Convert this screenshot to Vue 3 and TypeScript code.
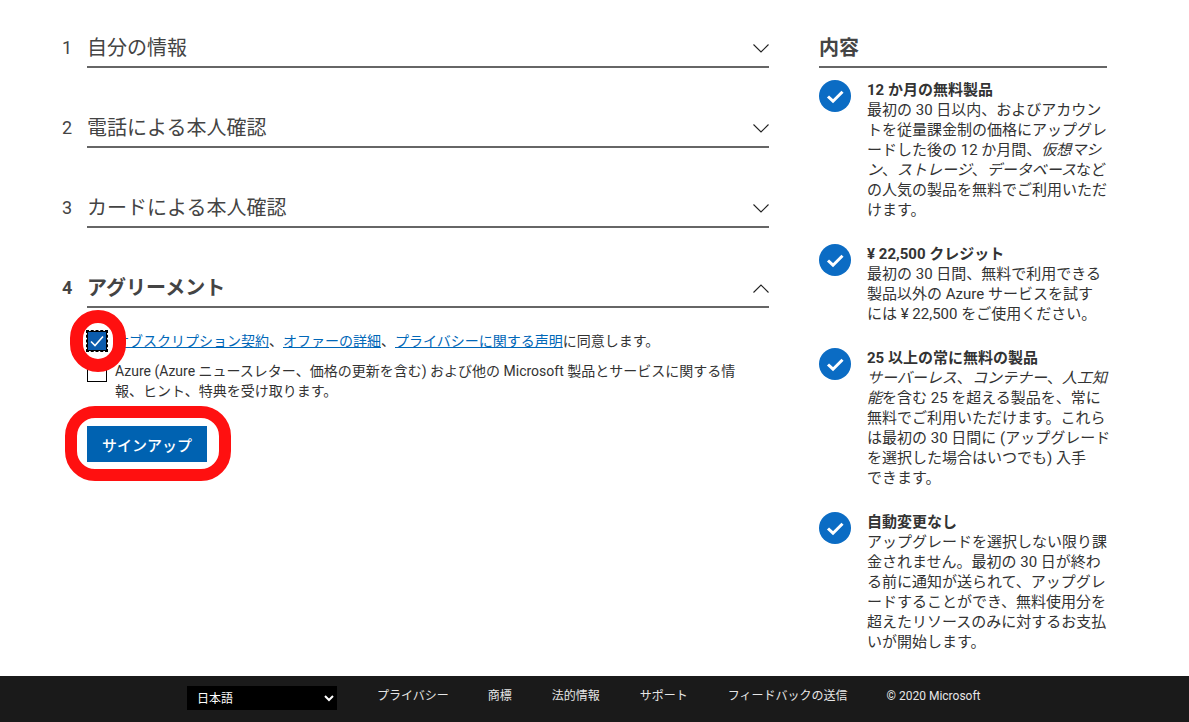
<script setup lang="ts">
const sections = [
  { n: '1', title: '自分の情報' },
  { n: '2', title: '電話による本人確認' },
  { n: '3', title: 'カードによる本人確認' },
]
const links = ['プライバシー', '商標', '法的情報', 'サポート', 'フィードバックの送信', '© 2020 Microsoft']
</script>

<template>
  <div class="page">
    <main class="main">
      <section class="left">
        <div v-for="s in sections" :key="s.n" class="step">
          <span class="num">{{ s.n }}</span>
          <div class="head">
            <h2>{{ s.title }}</h2>
            <svg class="chev" width="16" height="9" viewBox="0 0 16 9"><path d="M.5.5l7.5 7.5 7.5-7.5" fill="none" stroke="#222" stroke-width="1.1" /></svg>
          </div>
        </div>
        <div class="step active">
          <span class="num">4</span>
          <div class="head">
            <h2>アグリーメント</h2>
            <svg class="chev" width="16" height="9" viewBox="0 0 16 9"><path d="M.5 8.5L8 1l7.5 7.5" fill="none" stroke="#222" stroke-width="1.1" /></svg>
          </div>
        </div>
        <div class="agree">
          <div class="check-row first">
            <span class="box checked">
              <svg width="16" height="12" viewBox="0 0 16 12"><path d="M2 6.5l4 4 8-9" fill="none" stroke="#fff" stroke-width="1.6" /></svg>
              <span class="ring ring-check"></span>
            </span>
            <p><a>サブスクリプション契約</a>、<a>オファーの詳細</a>、<a>プライバシーに関する声明</a>に同意します。</p>
          </div>
          <div class="check-row">
            <span class="box"></span>
            <p>Azure (Azure ニュースレター、価格の更新を含む) および他の Microsoft 製品とサービスに関する情<br>報、ヒント、特典を受け取ります。</p>
          </div>
          <button class="signup">サインアップ<span class="ring ring-btn"></span></button>
        </div>
      </section>

      <aside class="right">
        <h2 class="side-title">内容</h2>
        <div class="item">
          <span class="tick"><svg width="32" height="32" viewBox="0 0 32 32"><circle cx="16" cy="16" r="16" fill="#0b6cc4" /><path d="M9 16.5l5 4.7 9.5-9.5" fill="none" stroke="#fff" stroke-width="3" /></svg></span>
          <div class="body">
            <h3>12 か月の無料製品</h3>
            <p>最初の 30 日以内、およびアカウン<br>トを従量課金制の価格にアップグレ<br>ードした後の 12 か月間、<em>仮想マシ<br>ン</em>、<em>ストレージ</em>、<em>データベース</em>など<br>の人気の製品を無料でご利用いただ<br>けます。</p>
          </div>
        </div>
        <div class="item">
          <span class="tick"><svg width="32" height="32" viewBox="0 0 32 32"><circle cx="16" cy="16" r="16" fill="#0b6cc4" /><path d="M9 16.5l5 4.7 9.5-9.5" fill="none" stroke="#fff" stroke-width="3" /></svg></span>
          <div class="body">
            <h3>¥ 22,500 クレジット</h3>
            <p>最初の 30 日間、無料で利用できる<br>製品以外の Azure サービスを試す<br>には ¥ 22,500 をご使用ください。</p>
          </div>
        </div>
        <div class="item">
          <span class="tick"><svg width="32" height="32" viewBox="0 0 32 32"><circle cx="16" cy="16" r="16" fill="#0b6cc4" /><path d="M9 16.5l5 4.7 9.5-9.5" fill="none" stroke="#fff" stroke-width="3" /></svg></span>
          <div class="body">
            <h3>25 以上の常に無料の製品</h3>
            <p><em>サーバーレス</em>、<em>コンテナー</em>、<em>人工知<br>能</em>を含む 25 を超える製品を、常に<br>無料でご利用いただけます。これら<br>は最初の 30 日間に (アップグレード<br>を選択した場合はいつでも) 入手<br>できます。</p>
          </div>
        </div>
        <div class="item">
          <span class="tick"><svg width="32" height="32" viewBox="0 0 32 32"><circle cx="16" cy="16" r="16" fill="#0b6cc4" /><path d="M9 16.5l5 4.7 9.5-9.5" fill="none" stroke="#fff" stroke-width="3" /></svg></span>
          <div class="body">
            <h3>自動変更なし</h3>
            <p>アップグレードを選択しない限り課<br>金されません。最初の 30 日が終わ<br>る前に通知が送られて、アップグレ<br>ードすることができ、無料使用分を<br>超えたリソースのみに対するお支払<br>いが開始します。</p>
          </div>
        </div>
      </aside>
    </main>

    <footer class="footer">
      <div class="lang">
        <span class="lang-text">日本語</span>
        <svg width="10" height="7" viewBox="0 0 10 7"><path d="M1 1l4 4 4-4" fill="none" stroke="#fff" stroke-width="2" /></svg>
      </div>
      <span v-for="l in links" :key="l" class="flink">{{ l }}</span>
    </footer>
  </div>
</template>

<style>
html, body { margin: 0; background: #fff; }
</style>

<style scoped>
.page {
  width: 1189px;
  height: 722px;
  display: flex;
  flex-direction: column;
  overflow: hidden;
  font-family: Roboto, "Noto Sans CJK JP", sans-serif;
  color: #333;
}
.main {
  flex: 1;
  display: flex;
  padding: 0 82px 0 62px;
  gap: 50px;
}
.left { width: 707px; }
.step { display: flex; height: 67px; margin-bottom: 13px; }
.step.active { font-weight: 700; margin-bottom: 0; }
.num { width: 25px; flex: none; font-size: 18px; line-height: 27px; padding-top: 34px; color: #444; }
.head {
  flex: 1;
  height: 68px;
  box-sizing: border-box;
  padding-top: 34px;
  border-bottom: 2px solid #666;
  display: flex;
  justify-content: space-between;
  align-items: flex-start;
}
h2 { margin: 0; font-size: 20px; line-height: 28px; font-weight: inherit; color: #444; }
.chev { margin-top: 10px; margin-right: 0; }
.agree { padding: 24px 0 0 25px; }
.check-row { display: flex; gap: 8px; font-size: 14px; line-height: 20px; margin-bottom: 10px; }
.check-row p { margin: 0; white-space: nowrap; }
.box {
  position: relative;
  flex: none;
  width: 20px;
  height: 20px;
  box-sizing: border-box;
  border: 1px solid #000;
  margin-top: 1px;
  display: flex;
  align-items: center;
  justify-content: center;
}
.first .box { margin-top: 0; }
.checked { background: #0b5cad; outline: 1px dashed #000; z-index: 1; }
a { color: #0067b8; text-decoration: underline; }
.ring { position: absolute; border: 13px solid #ff1010; background: transparent; box-sizing: border-box; pointer-events: none; }
.ring-check { left: -18px; top: -22px; width: 56px; height: 62px; border-radius: 28px; }
.signup {
  position: relative;
  display: block;
  margin-top: 25px;
  width: 120px;
  height: 36px;
  border: 0;
  background: #0062b1;
  color: #fff;
  font: inherit;
  font-size: 15px;
  font-weight: 500;
}
.ring-btn { left: -22px; top: -20px; width: 166px; height: 75px; border-radius: 30px; border-width: 12px; }
.right { width: 288px; flex: none; }
.side-title {
  font-weight: 700;
  height: 68px;
  box-sizing: border-box;
  padding-top: 34px;
  border-bottom: 2px solid #666;
}
.item { display: flex; gap: 16px; margin-top: 12px; margin-bottom: 24px; }
.item + .item { margin-top: 0; }
.tick { flex: none; width: 32px; height: 32px; }
.body { width: 240px; font-size: 15px; line-height: 20px; white-space: nowrap; }
h3 { margin: 0; font-size: 15px; line-height: 20px; font-weight: 700; }
.body p { margin: 0; }
.footer {
  height: 46px;
  background: #1a1a1a;
  flex: none;
  display: flex;
  align-items: flex-start;
  padding: 10px 0 0 187px;
  box-sizing: border-box;
  color: #e6e6e6;
  font-size: 12px;
  line-height: 20px;
}
.lang {
  width: 150px;
  height: 24px;
  background: #000;
  color: #fff;
  display: flex;
  align-items: center;
  justify-content: space-between;
  box-sizing: border-box;
  padding: 0 3px 0 10px;
  margin-right: 40px;
}
.lang-text { padding-top: 2px; }
.flink { margin-right: 40px; }
.flink:nth-child(2) { margin-right: 39px; }
.flink:nth-child(6) { margin-right: 39px; }
.flink:last-child { margin-right: 0; }
</style>
